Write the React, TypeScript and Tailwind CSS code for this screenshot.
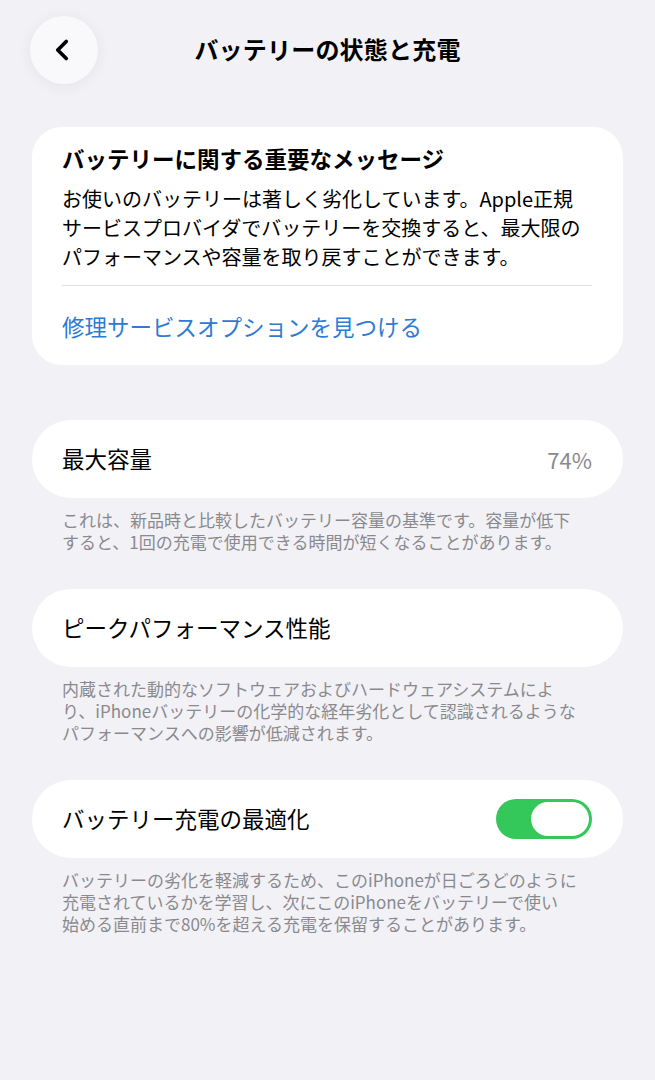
import { ChevronLeft } from "lucide-react";

const font = { fontFamily: '"Noto Sans CJK JP", "Noto Sans", sans-serif' };

function Caption({ lines }: { lines: string[] }) {
  return (
    <p className="mt-[11px] px-[30px] text-[17px] leading-[22px] text-[#8a8a8e] whitespace-nowrap">
      {lines.map((l, i) => (
        <span key={i} className="block">
          {l}
        </span>
      ))}
    </p>
  );
}

function Row({ children }: { children: React.ReactNode }) {
  return (
    <div className="flex h-[78px] items-center justify-between rounded-full bg-white pl-[30px] pr-[31px]">
      {children}
    </div>
  );
}

export default function App() {
  return (
    <div style={font} className="min-h-[1080px] w-[655px] bg-[#f2f1f6] text-black">
      <header className="relative flex h-[100px] items-center justify-center pb-[2px]">
        <button className="absolute left-[30px] top-[16px] flex h-[68px] w-[68px] items-center justify-center rounded-full bg-[#f9f9fc] shadow-[0_2px_16px_rgba(0,0,0,0.06)]">
          <ChevronLeft className="h-[34px] w-[34px] -translate-x-[2px]" strokeWidth={2.6} />
        </button>
        <h1 className="text-[24px] font-semibold leading-none tracking-[0.2px]">
          バッテリーの状態と充電
        </h1>
      </header>

      <main className="mt-[27px] px-[32px]">
        <section className="rounded-[30px] bg-white pl-[30px] pr-[31px] pt-[16px] pb-[24px]">
          <h2 className="text-[22.5px] font-bold leading-[30px]">
            バッテリーに関する重要なメッセージ
          </h2>
          <p className="mt-[11px] text-[20px] leading-[29px] whitespace-nowrap">
            <span className="block">お使いのバッテリーは著しく劣化しています。Apple正規</span>
            <span className="block">サービスプロバイダでバッテリーを交換すると、最大限の</span>
            <span className="block">パフォーマンスや容量を取り戻すことができます。</span>
          </p>
          <div className="mt-[14px] h-px bg-[#e2e2e6]" />
          <a className="mt-[25px] block text-[22.5px] leading-[30px] text-[#2f7ad5]">
            修理サービスオプションを見つける
          </a>
        </section>

        <div className="mt-[55px]">
          <Row>
            <span className="text-[22.5px]">最大容量</span>
            <span className="text-[22px] text-[#8a8a8e]">74%</span>
          </Row>
          <Caption
            lines={[
              "これは、新品時と比較したバッテリー容量の基準です。容量が低下",
              "すると、1回の充電で使用できる時間が短くなることがあります。",
            ]}
          />
        </div>

        <div className="mt-[36px]">
          <Row>
            <span className="text-[22.5px]">ピークパフォーマンス性能</span>
          </Row>
          <Caption
            lines={[
              "内蔵された動的なソフトウェアおよびハードウェアシステムによ",
              "り、iPhoneバッテリーの化学的な経年劣化として認識されるような",
              "パフォーマンスへの影響が低減されます。",
            ]}
          />
        </div>

        <div className="mt-[36px]">
          <Row>
            <span className="text-[22.5px]">バッテリー充電の最適化</span>
            <span className="flex h-[40px] w-[96px] items-center justify-end rounded-full bg-[#34c759] pr-[3px]">
              <span className="h-[34px] w-[58px] rounded-full bg-white" />
            </span>
          </Row>
          <Caption
            lines={[
              "バッテリーの劣化を軽減するため、このiPhoneが日ごろどのように",
              "充電されているかを学習し、次にこのiPhoneをバッテリーで使い",
              "始める直前まで80%を超える充電を保留することがあります。",
            ]}
          />
        </div>
      </main>
    </div>
  );
}
